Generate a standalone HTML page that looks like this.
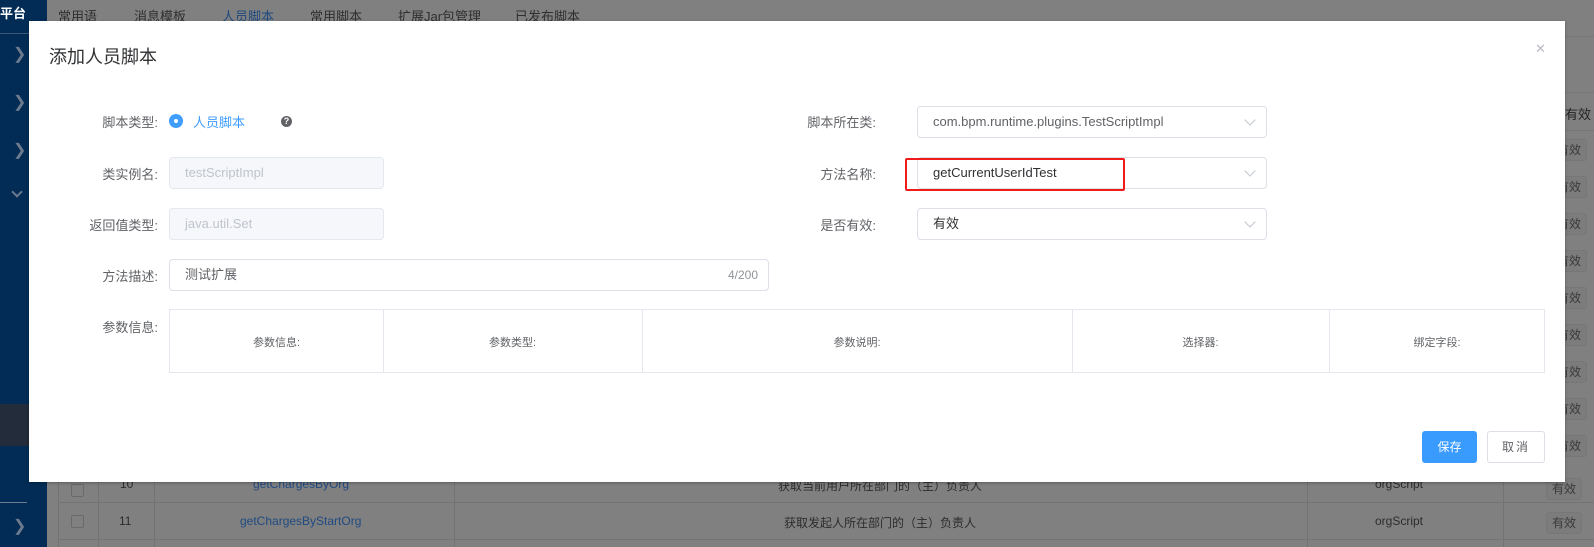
<!DOCTYPE html>
<html><head><meta charset="utf-8"><style>
*{margin:0;padding:0;box-sizing:border-box}
body{width:1594px;height:547px;overflow:hidden;background:#808080;font-family:"Liberation Sans","Noto Sans CJK SC",sans-serif;position:relative;color:#606266}
.a{position:absolute}
.side{left:0;top:0;width:47px;height:547px;background:#022c55}
.chev{color:#6b7a8c;font-size:16px;left:13px}
.tab{top:6px;font-size:13px;color:#2f2f2f}
.modal{left:29px;top:21px;width:1536px;height:461px;background:#fff;box-shadow:0 1px 3px rgba(0,0,0,.3)}
.lbl{font-size:13px;color:#606266;text-align:right;width:120px}
.inp{border:1px solid #dcdfe6;border-radius:4px;height:32px;font-size:13px;line-height:30px;padding-left:15px;color:#606266;background:#fff}
.dis{background:#f5f7fa;border-color:#e4e7ed;color:#c0c4cc}
.arr{position:absolute;right:12px;top:9px;width:8px;height:8px;border-right:1px solid #c0c4cc;border-bottom:1px solid #c0c4cc;transform:rotate(45deg)}
.th{font-size:11px;color:#606266;text-align:center;top:24px}
.bgt{font-size:12px;color:#2c2c2c}
.eff{width:36px;height:22px;border:1px solid #777;border-radius:3px;background:#7c7c7c;font-size:12px;color:#3a3a3a;text-align:center;line-height:20px}
</style></head><body>
<div class="a side"></div>
<div class="a" style="left:0;top:0;width:47px;height:30px;color:#fff;font-size:13px;font-weight:bold;padding:3px 0 0 0">平台</div>
<div class="a" style="left:0;top:33px;width:47px;height:1px;background:#3d5676"></div>
<div class="a chev" style="top:44px">&#x276F;</div>
<div class="a chev" style="top:92px">&#x276F;</div>
<div class="a chev" style="top:140px">&#x276F;</div>
<div class="a" style="left:13px;top:188px;width:8px;height:8px;border-right:2px solid #6b7a8c;border-bottom:2px solid #6b7a8c;transform:rotate(45deg)"></div>
<div class="a" style="left:0;top:404px;width:29px;height:42px;background:#232c3a"></div>
<div class="a" style="left:0;top:502px;width:27px;height:1px;background:#6b7a8c"></div>
<div class="a chev" style="top:516px">&#x276F;</div>
<div class="a tab" style="left:58px">常用语</div>
<div class="a tab" style="left:134px">消息模板</div>
<div class="a tab" style="left:222px;color:#1f4a80">人员脚本</div>
<div class="a tab" style="left:310px">常用脚本</div>
<div class="a tab" style="left:398px">扩展Jar包管理</div>
<div class="a tab" style="left:515px">已发布脚本</div>
<div class="a" style="left:47px;top:36px;width:1547px;height:1px;background:#767676"></div>
<div class="a" style="left:58px;top:482px;width:1536px;height:65px;border-left:1px solid #737373"></div>
<div class="a" style="left:58px;top:502px;width:1536px;height:1px;background:#737373"></div>
<div class="a" style="left:58px;top:539px;width:1536px;height:1px;background:#737373"></div>
<div class="a" style="left:98px;top:482px;width:1px;height:65px;background:#737373"></div>
<div class="a" style="left:154px;top:482px;width:1px;height:65px;background:#737373"></div>
<div class="a" style="left:454px;top:482px;width:1px;height:65px;background:#737373"></div>
<div class="a" style="left:1307px;top:482px;width:1px;height:65px;background:#737373"></div>
<div class="a" style="left:1503px;top:482px;width:1px;height:65px;background:#737373"></div>
<div class="a" style="left:71px;top:484px;width:13px;height:13px;border:1px solid #6a6a6a;border-radius:2px"></div>
<div class="a" style="left:71px;top:515px;width:13px;height:13px;border:1px solid #6a6a6a;border-radius:2px"></div>
<div class="a bgt" style="left:120px;top:477px">10</div>
<div class="a bgt" style="left:119px;top:514px">11</div>
<div class="a bgt" style="left:253px;top:477px;color:#1f4a80">getChargesByOrg</div>
<div class="a bgt" style="left:240px;top:514px;color:#1f4a80">getChargesByStartOrg</div>
<div class="a bgt" style="left:778px;top:477px">获取当前用户所在部门的（主）负责人</div>
<div class="a bgt" style="left:784px;top:514px">获取发起人所在部门的（主）负责人</div>
<div class="a bgt" style="left:1375px;top:477px">orgScript</div>
<div class="a bgt" style="left:1375px;top:514px">orgScript</div>
<div class="a eff" style="left:1546px;top:478px">有效</div>
<div class="a eff" style="left:1546px;top:512px">有效</div>
<div class="a" style="left:1565px;top:92px;width:29px;height:1px;background:#767676"></div>
<div class="a" style="left:1565px;top:104px;font-size:13px;color:#222">有效</div>
<div class="a" style="left:1565px;top:130px;width:29px;height:1px;background:#767676"></div>
<div class="a eff" style="left:1551px;top:139px">有效</div>
<div class="a eff" style="left:1551px;top:176px">有效</div>
<div class="a eff" style="left:1551px;top:213px">有效</div>
<div class="a eff" style="left:1551px;top:250px">有效</div>
<div class="a eff" style="left:1551px;top:287px">有效</div>
<div class="a eff" style="left:1551px;top:324px">有效</div>
<div class="a eff" style="left:1551px;top:361px">有效</div>
<div class="a eff" style="left:1551px;top:398px">有效</div>
<div class="a eff" style="left:1551px;top:435px">有效</div>
<div class="a modal"></div>
<div class="a" style="left:49px;top:43px;font-size:18px;color:#303133">添加人员脚本</div>
<div class="a" style="left:1535px;top:41px;font-size:13px;color:#b8bbc0">✕</div>
<div class="a lbl" style="left:38px;top:112px">脚本类型:</div>
<div class="a" style="left:169px;top:114px;width:14px;height:14px;border-radius:50%;background:#409eff"></div>
<div class="a" style="left:174px;top:119px;width:4px;height:4px;border-radius:50%;background:#fff"></div>
<div class="a" style="left:193px;top:112px;font-size:13px;color:#409eff">人员脚本</div>
<div class="a" style="left:281px;top:116px;width:11px;height:11px;border-radius:50%;background:#606266;color:#fff;font-size:9px;font-weight:bold;text-align:center;line-height:11px">?</div>
<div class="a lbl" style="left:38px;top:164px">类实例名:</div>
<div class="a inp dis" style="left:169px;top:157px;width:215px">testScriptImpl</div>
<div class="a lbl" style="left:38px;top:215px">返回值类型:</div>
<div class="a inp dis" style="left:169px;top:208px;width:215px">java.util.Set</div>
<div class="a lbl" style="left:38px;top:266px">方法描述:</div>
<div class="a inp" style="left:169px;top:259px;width:600px">测试扩展<span style="position:absolute;right:10px;font-size:12px;color:#909399">4/200</span></div>
<div class="a lbl" style="left:38px;top:317px">参数信息:</div>
<div class="a" style="left:169px;top:309px;width:1376px;height:64px;border:1px solid #e4e7ed">
 <div class="a" style="left:213px;top:0;width:1px;height:62px;background:#e4e7ed"></div>
 <div class="a" style="left:472px;top:0;width:1px;height:62px;background:#e4e7ed"></div>
 <div class="a" style="left:902px;top:0;width:1px;height:62px;background:#e4e7ed"></div>
 <div class="a" style="left:1159px;top:0;width:1px;height:62px;background:#e4e7ed"></div>
 <div class="a th" style="left:0;width:213px">参数信息:</div>
 <div class="a th" style="left:213px;width:259px">参数类型:</div>
 <div class="a th" style="left:472px;width:430px">参数说明:</div>
 <div class="a th" style="left:902px;width:257px">选择器:</div>
 <div class="a th" style="left:1159px;width:216px">绑定字段:</div>
</div>
<div class="a lbl" style="left:756px;top:112px">脚本所在类:</div>
<div class="a inp" style="left:917px;top:106px;width:350px">com.bpm.runtime.plugins.TestScriptImpl<i class="arr"></i></div>
<div class="a lbl" style="left:756px;top:164px">方法名称:</div>
<div class="a inp" style="left:917px;top:157px;width:350px;color:#303133">getCurrentUserIdTest<i class="arr"></i></div>
<div class="a" style="left:905px;top:158px;width:220px;height:33px;border:2px solid #f01c1c;border-radius:2px"></div>
<div class="a lbl" style="left:756px;top:215px">是否有效:</div>
<div class="a inp" style="left:917px;top:208px;width:350px;color:#303133">有效<i class="arr"></i></div>
<div class="a" style="left:1422px;top:431px;width:55px;height:32px;background:#3a9bff;border-radius:3px;color:#fff;font-size:12px;text-align:center;line-height:32px">保存</div>
<div class="a" style="left:1487px;top:431px;width:58px;height:32px;border:1px solid #dcdfe6;border-radius:3px;color:#606266;font-size:12px;text-align:center;line-height:30px;letter-spacing:2px">取消</div>
</body></html>
